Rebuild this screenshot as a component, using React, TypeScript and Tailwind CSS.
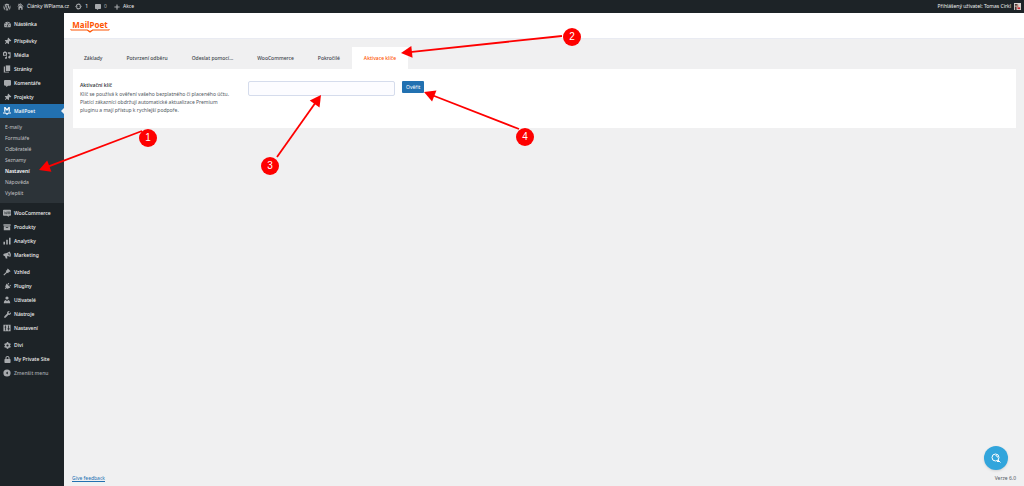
import type { ReactNode } from "react"
import { FaWordpress, FaTachometerAlt, FaThumbtack, FaCommentAlt, FaPlug, FaWrench, FaLock, FaCog, FaPlus } from "react-icons/fa"

const Glyph = ({ children }: { children: ReactNode }) => (
  <svg viewBox="0 0 20 20" fill="currentColor" className="w-[8px] h-[8px]">
    {children}
  </svg>
)

const icons = {
  dashboard: <FaTachometerAlt />,
  pin: <FaThumbtack className="rotate-45" />,
  comment: <FaCommentAlt />,
  plug: <FaPlug className="rotate-45" />,
  wrench: <FaWrench />,
  lock: <FaLock />,
  gear: <FaCog />,
  media: (
    <Glyph>
      <path d="M0 3h2l1-2h4l1 2h2v9H0z M5 5a2.500 2.500 0 1 0 0 5 2.500 2.500 0 0 0 0-5z" fillRule="evenodd" />
      <path d="M12 3h7v12.500a3 3 0 1 1-2.500-3V7H12z M8 13h2v4a2.500 2.500 0 1 1-2-2z" />
    </Glyph>
  ),
  pages: (
    <Glyph>
      <path d="M7 1h11v14H7z" />
      <path d="M2 4h3v13h10v2H2z" />
    </Glyph>
  ),
  mailpoet: (
    <Glyph>
      <path d="M3 12V0h3l4 5 4-5h3v12h-3V5l-4 5-4-5v7z" />
      <path d="M0 14h7l3 2 3-2h7v2.500h-6L10 20l-4-3.500H0z" />
    </Glyph>
  ),
  woo: (
    <Glyph>
      <path d="M2 2h16a2 2 0 0 1 2 2v11a2 2 0 0 1-2 2h-4l1 3-5-3H2a2 2 0 0 1-2-2V4a2 2 0 0 1 2-2z" />
      <path d="M3 6l2 7 2-5 2 5 1-7M12 7h2v5h-2zM16 7h2v5h-2z" fill="none" stroke="#1d2327" strokeWidth="1" />
    </Glyph>
  ),
  archive: (
    <Glyph>
      <path d="M1 3h18v4H1zM2 8h16v10H2zM7 10v2h6v-2z" fillRule="evenodd" />
    </Glyph>
  ),
  chart: (
    <Glyph>
      <path d="M1 12h4v7H1zM8 7h4v12H8zM15 2h4v17h-4z" />
    </Glyph>
  ),
  megaphone: (
    <Glyph>
      <path d="M16 1c4 4 5 10 2 14-3-2-6-2-8-2l1 6H7l-2-6c-5 0-6-6-1-7 5-1 9-2 12-5z M14 5c-1 3 0 6 2 7 1-3 0-6-2-7z" fillRule="evenodd" />
    </Glyph>
  ),
  brush: (
    <Glyph>
      <path d="M12 1l7 7-3 2-1-1-2 4-3-1-7 7-2-2 7-7-1-3 4-2-1-1z" />
    </Glyph>
  ),
  user: (
    <Glyph>
      <circle cx="10" cy="5" r="4" />
      <path d="M2 18c0-6 3-8 5-8l3 3 3-3c2 0 5 2 5 8z" />
    </Glyph>
  ),
  sliders: (
    <Glyph>
      <path d="M1 2h18v16H1z M5 4v3H4v2h1v7h2V9h1V7H7V4z M13 4v7h-2v2h2v3h2v-3h2v-2h-2V4z" fillRule="evenodd" />
    </Glyph>
  ),
  collapse: (
    <Glyph>
      <path d="M10 1a9 9 0 1 1 0 18 9 9 0 0 1 0-18z M12 6l-5 4 5 4z" fillRule="evenodd" />
    </Glyph>
  ),
}

type Item = { label: string; icon: keyof typeof icons }

const contentMenu: Item[] = [
  { label: "Příspěvky", icon: "pin" },
  { label: "Média", icon: "media" },
  { label: "Stránky", icon: "pages" },
  { label: "Komentáře", icon: "comment" },
  { label: "Projekty", icon: "pin" },
  { label: "MailPoet", icon: "mailpoet" },
]

const subMenu = ["E-maily", "Formuláře", "Odběratelé", "Seznamy", "Nastavení", "Nápověda", "Vylepšit"]

const shopMenu: Item[] = [
  { label: "WooCommerce", icon: "woo" },
  { label: "Produkty", icon: "archive" },
  { label: "Analytiky", icon: "chart" },
  { label: "Marketing", icon: "megaphone" },
]

const adminMenu: Item[] = [
  { label: "Vzhled", icon: "brush" },
  { label: "Pluginy", icon: "plug" },
  { label: "Uživatelé", icon: "user" },
  { label: "Nástroje", icon: "wrench" },
  { label: "Nastavení", icon: "sliders" },
]

const extraMenu: Item[] = [
  { label: "Divi", icon: "gear" },
  { label: "My Private Site", icon: "lock" },
]

const tabs = ["Základy", "Potvrzení odběru", "Odeslat pomocí…", "WooCommerce", "Pokročilé", "Aktivace klíče"]

const steps = [
  { n: 1, x: 148, y: 138, from: [142, 131], to: [39, 170] },
  { n: 2, x: 572, y: 37, from: [562, 36], to: [401, 53] },
  { n: 3, x: 270, y: 166, from: [277, 157], to: [321, 95] },
  { n: 4, x: 525, y: 137, from: [519, 129], to: [424, 92] },
]

const MenuGroup = ({ items }: { items: Item[] }) => (
  <ul>
    {items.map((item) => {
      const active = item.label === "MailPoet"
      return (
        <li key={item.label}>
          <a
            href="#"
            className={`relative flex items-center gap-[3px] h-[14px] pl-[3px] ${active ? "bg-[#2271b1] text-white" : "text-[#f0f0f1]"}`}
          >
            <span className={`flex justify-center w-[8px] text-[7px] ${active ? "text-white" : "text-[#a7aaad]"}`}>
              {icons[item.icon]}
            </span>
            {item.label}
            {active && (
              <span className="absolute right-0 top-[4px] border-y-[3px] border-r-[3px] border-y-transparent border-r-[#f0f0f1]" />
            )}
          </a>
        </li>
      )
    })}
  </ul>
)

const Sidebar = () => (
  <nav className="flex flex-col gap-[3px] w-[64px] shrink-0 pt-[4px] bg-[#1d2327] text-[5px] leading-[8px] font-medium">
    <MenuGroup items={[{ label: "Nástěnka", icon: "dashboard" }]} />
    <div>
      <MenuGroup items={contentMenu} />
      <ul className="pt-[3px] pb-[5px] pl-[5px] bg-[#2c3338] font-normal text-[#c3c4c7]">
        {subMenu.map((label) => (
          <li key={label}>
            <a href="#" className={`flex items-center h-[11px] ${label === "Nastavení" ? "font-semibold text-white" : ""}`}>
              {label}
            </a>
          </li>
        ))}
      </ul>
    </div>
    <MenuGroup items={shopMenu} />
    <MenuGroup items={adminMenu} />
    <div>
      <MenuGroup items={extraMenu} />
      <button className="flex items-center gap-[3px] h-[14px] pl-[3px] text-[#a7aaad]">
        {icons.collapse}
        Zmenšit menu
      </button>
    </div>
  </nav>
)

const AdminBar = () => (
  <header className="flex items-center h-[13px] px-[3px] bg-[#1d2327] text-[5px] text-[#f0f0f1]">
    <a href="#" aria-label="WordPress" className="mr-[6px] text-[8px] text-[#a7aaad]"><FaWordpress /></a>
    <a href="#" className="flex items-center gap-[3px] mr-[6px]">
      <svg viewBox="0 0 20 20" className="w-[7px] h-[7px] text-[#a7aaad]" fill="currentColor">
        <path d="M10 1l9 9-2 1-7-7-7 7-2-1 3-3V2h3v2z M4 12l6-6 6 6v7h-4v-5H8v5H4z" />
      </svg>
      Články WPlama.cz
    </a>
    <a href="#" className="flex items-center gap-[3px] mr-[7px]">
      <svg viewBox="0 0 20 20" className="w-[7px] h-[7px] text-[#a7aaad]" fill="currentColor">
        <path d="M4 9a6 6 0 0 1 11-3M16 11a6 6 0 0 1-11 3" fill="none" stroke="currentColor" strokeWidth="3" />
        <path d="M0 9h8l-4 5zM20 11h-8l4-5z" />
      </svg>
      1
    </a>
    <a href="#" className="flex items-center gap-[3px] mr-[7px] text-[#a7aaad]"><FaCommentAlt className="text-[6px]" />0</a>
    <a href="#" className="flex items-center gap-[3px]"><FaPlus className="text-[6px] text-[#a7aaad]" />Akce</a>
    <a href="#" className="flex items-center gap-[3px] ml-auto">
      Přihlášený uživatel: Tomas Cirkl
      <svg viewBox="0 0 8 8" className="w-[7px] h-[7px]">
        <path fill="#d9d3cf" d="M0 0h8v8H0z" />
        <path fill="#4a3c38" d="M1 1h3v2H1zM1 4h2v4H1z" />
        <path fill="#b98572" d="M3 2h2v3H3z" />
        <path fill="#c8242c" d="M4 5h3v2H4z" />
      </svg>
    </a>
  </header>
)

const Logo = () => (
  <a href="#" className="flex flex-col items-center w-[40px] pt-[1px] font-bold text-[8px] leading-[9px] text-[#fe5301]">
    MailPoet
    <svg viewBox="0 0 40 4" className="w-full h-[4px]" fill="currentColor">
      <path d="M0 0l2 .500h15.500l2.500 1.500 2.500-1.500h15.500l2-.500-1 1.500h-16l-3 2.200-3-2.200H1z" />
    </svg>
  </a>
)

// Numbered callouts drawn over the page
const Steps = () => (
  <svg className="absolute left-0 top-0 w-[1024px] h-[486px] pointer-events-none" viewBox="0 0 1024 486">
    {steps.map(({ n, x, y, from, to }) => {
      const angle = (Math.atan2(to[1] - from[1], to[0] - from[0]) * 180) / Math.PI
      const length = Math.hypot(to[0] - from[0], to[1] - from[1])
      return (
        <g key={n} fill="#fe0000">
          <g transform={`translate(${to[0]} ${to[1]}) rotate(${angle})`}>
            <path d="M0 0L-11 -6V6z" />
            <path d={`M${-length} 0H-9`} stroke="#fe0000" strokeWidth="1.800" />
          </g>
          <circle cx={x} cy={y} r="9" />
          <text x={x} y={y + 3} textAnchor="middle" fill="#fff" className="font-['Liberation_Sans',sans-serif] text-[10px]">
            {n}
          </text>
        </g>
      )
    })}
  </svg>
)

export default function App() {
  return (
    <div className="relative flex flex-col min-h-screen bg-[#f0f0f1] font-['Noto_Sans',sans-serif] text-[#3c434a]">
      <AdminBar />
      <div className="flex flex-1">
        <Sidebar />
        <div className="flex flex-col flex-1 min-w-0">
          <div className="flex items-center h-[26px] px-[6px] bg-white border-b border-[#e9ebf2]">
            <Logo />
          </div>
          <main className="px-[8px] pt-[8px]">
            <div role="tablist" className="flex text-[5px] leading-[8px] font-medium">
              {tabs.map((tab) => {
                const active = tab === "Aktivace klíče"
                return (
                  <button
                    key={tab}
                    role="tab"
                    aria-selected={active}
                    className={`h-[22px] px-[12px] whitespace-nowrap ${active ? "bg-white text-[#fe5301]" : ""}`}
                  >
                    {tab}
                  </button>
                )
              })}
            </div>
            <form className="flex items-start ml-[1px] pt-[12px] pb-[14px] pl-[7px] bg-white">
              <div className="w-[168px] text-[5px] leading-[8px]">
                <label htmlFor="key" className="block leading-[9px] font-semibold">Aktivační klíč</label>
                <p className="w-[156px] text-[#50575e]">
                  Klíč se používá k ověření vašeho bezplatného či placeného účtu. Platící zákazníci obdržují automatické aktualizace Premium pluginu a mají přístup k rychlejší podpoře.
                </p>
              </div>
              <input id="key" type="text" className="w-[147px] h-[15px] px-[4px] border border-[#d5dcec] rounded-[2px] bg-[#fcfcff] text-[5px]" />
              <button type="button" className="flex items-center h-[12px] ml-[7px] px-[4px] rounded-[1px] bg-[#2271b1] text-[5px] leading-[8px] text-white">Ověřit</button>
            </form>
          </main>
          <footer className="flex justify-between mt-auto px-[8px] pb-[4px] text-[5px] leading-[8px]">
            <a href="#" className="text-[#2271b1] underline">Give feedback</a>
            <span className="text-[#50575e]">Verze 6.0</span>
          </footer>
        </div>
      </div>
      <button aria-label="Nápověda" className="absolute right-[16px] bottom-[16px] flex items-center justify-center w-[24px] h-[24px] rounded-full bg-[#32a5dc] text-white shadow">
        <svg viewBox="0 0 20 20" className="w-[10px] h-[10px]" fill="none" stroke="currentColor" strokeWidth="2">
          <circle cx="9" cy="9" r="7" />
          <path d="M14 14l5 5M9 5a4 4 0 0 1 4 4M12 17h6" />
        </svg>
      </button>
      <Steps />
    </div>
  )
}
